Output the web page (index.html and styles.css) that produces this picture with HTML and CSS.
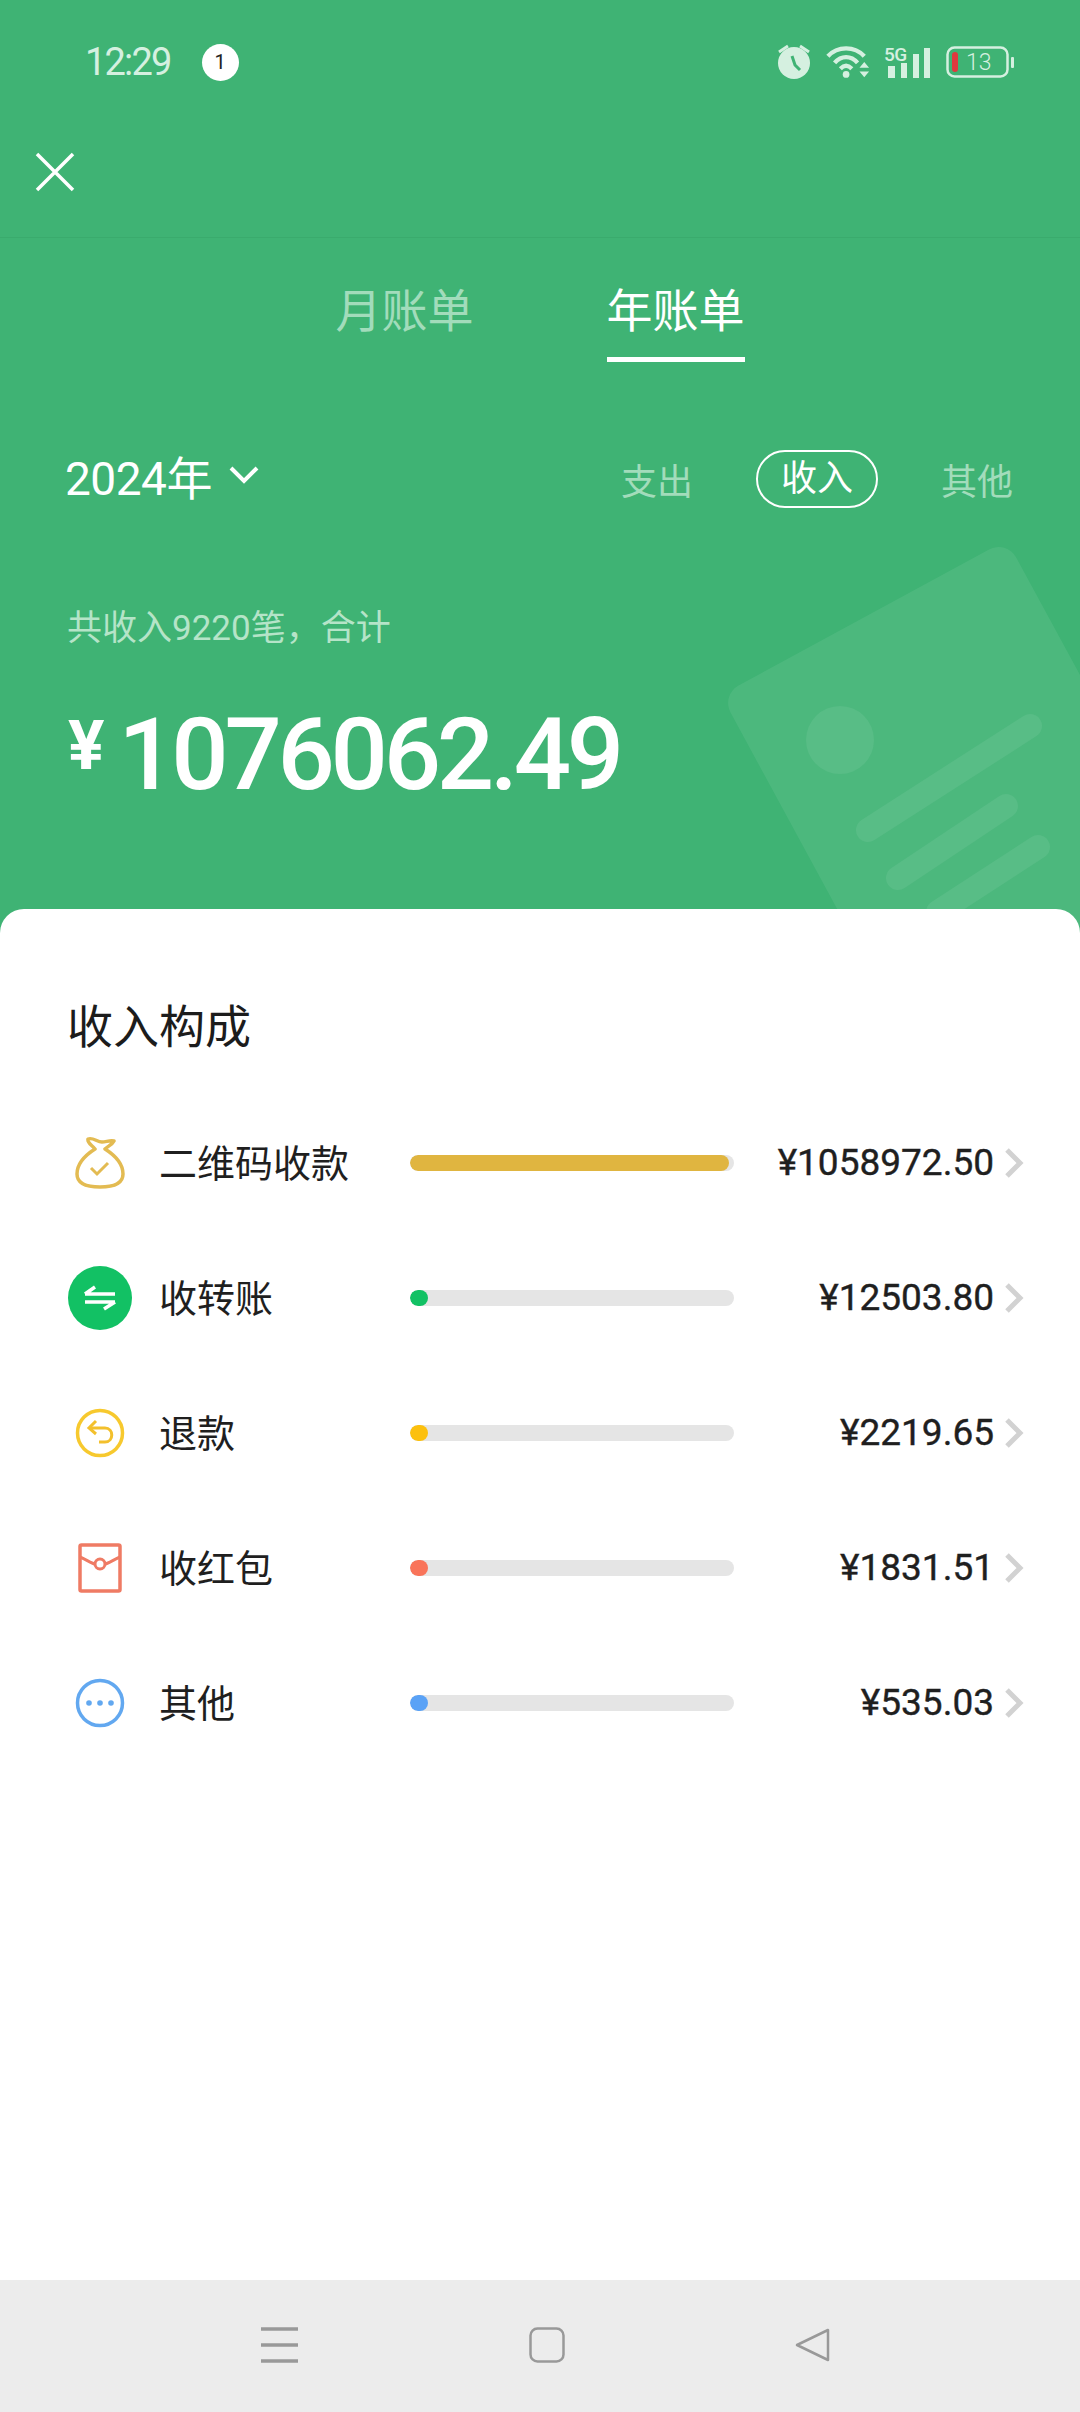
FILE: index.html
```html
<!doctype html>
<html lang="zh-CN">
    <head>
        <meta charset="UTF-8" />
        <meta name="viewport" content="width=device-width, initial-scale=1.0" />
        <title>年账单</title>
        <link rel="stylesheet" href="styles.css">
    </head>
    <body>
        <div class="page">
            <div class="header">
                <svg class="decor" width="380" height="400" viewBox="0 0 380 400">
                    <rect x="21" y="155" width="325" height="420" rx="20" transform="rotate(-28.5 21 155)" fill="#fff" fill-opacity="0.07"/>
                    <circle cx="140" cy="200" r="34" fill="#fff" fill-opacity="0.07"/>
                    <path d="M168 290 L330 186 M198 338 L306 266 M238 372 L338 307" stroke="#fff" stroke-opacity="0.07" stroke-width="24" stroke-linecap="round"/>
                </svg>
                <div class="status-bar">
                    <div class="status-left">
                        <span class="time">12:29</span>
                        <span class="badge">1</span>
                    </div>
                    <div class="status-icons">
                        <svg width="36" height="36" viewBox="0 0 36 36">
                            <circle cx="18" cy="19" r="16" fill="#d5f0e0"/>
                            <path d="M3 8 L12 2 M33 8 L24 2" stroke="#d5f0e0" stroke-width="3" fill="none"/>
                            <path d="M16 12 L19 21 L24 26" stroke="#3fb374" stroke-width="3" fill="none"/>
                        </svg>
                        <svg class="wifi" width="44" height="34" viewBox="0 0 46 34">
                            <path d="M2 11 C12 0 30 0 40 11 M9 18 C16 10 26 10 33 18 M15 24 C19 20 23 20 27 24" stroke="#d5f0e0" stroke-width="4.5" fill="none"/>
                            <circle cx="21" cy="30" r="3.5" fill="#d5f0e0"/>
                            <path d="M35 23 L45 23 L40 17 Z M35 27 L45 27 L40 33 Z" fill="#d5f0e0"/>
                        </svg>
                        <svg class="signal" width="48" height="36" viewBox="0 0 48 36">
                            <text x="0" y="17" class="signal-text">5G</text>
                            <rect x="4" y="22" width="7" height="12" fill="#d5f0e0"/>
                            <rect x="17" y="19" width="6" height="15" fill="#d5f0e0"/>
                            <rect x="29" y="10" width="6" height="24" fill="#d5f0e0"/>
                            <rect x="40" y="4" width="6" height="30" fill="#d5f0e0"/>
                        </svg>
                        <svg class="battery" width="68" height="34" viewBox="0 0 68 34">
                            <rect x="1.5" y="2.5" width="60" height="29" rx="7" fill="none" stroke="#d5f0e0" stroke-width="2.5"/>
                            <rect x="6" y="7" width="6" height="20" rx="3" fill="#e0393e"/>
                            <rect x="65" y="12" width="3" height="11" rx="1" fill="#d5f0e0"/>
                            <text x="20" y="25" class="battery-text">13</text>
                        </svg>
                    </div>
                </div>
                <div class="toolbar">
                    <svg width="40" height="40" viewBox="0 0 40 40">
                        <path d="M2 2 L38 38 M38 2 L2 38" stroke="#fff" stroke-width="3.5" fill="none"/>
                    </svg>
                </div>
                <div class="tabs">
                    <div class="tab">月账单</div>
                    <div class="tab tab-active">年账单</div>
                </div>
                <div class="filter-row">
                    <div class="year">
                        2024年
                        <svg width="30" height="20" viewBox="0 0 30 20">
                            <path d="M2 3 L15 16 L28 3" stroke="#fff" stroke-width="4" fill="none"/>
                        </svg>
                    </div>
                    <div class="filters">
                        <span class="filter">支出</span>
                        <span class="filter filter-active">收入</span>
                        <span class="filter">其他</span>
                    </div>
                </div>
                <div class="summary">共收入9220笔，合计</div>
                <div class="total"><span class="total-sign">¥</span>1076062.49</div>
            </div>

            <div class="sheet">
                <h2>收入构成</h2>

                <div class="row">
                    <div class="row-icon">
                        <svg width="50" height="54" viewBox="0 0 50 54">
                            <path d="M20 13 C17 9 12 7 13 3 C18 1 22 6 27 6 C31 6 35 4 39 5 C37 9 33 10 30 13 C41 20 48 29 48 38 C48 48 38 51 25 51 C12 51 2 48 2 38 C2 29 9 20 20 13 Z" fill="none" stroke="#e3bb52" stroke-width="3.5" stroke-linejoin="round"/>
                            <path d="M16 32 L22 38 L33 27" fill="none" stroke="#e3bb52" stroke-width="3"/>
                        </svg>
                    </div>
                    <div class="row-label">二维码收款</div>
                    <div class="track"><div class="fill fill-gold" style="width: 98.5%"></div></div>
                    <div class="row-amount">¥1058972.50</div>
                    <svg class="chevron" width="20" height="30" viewBox="0 0 20 30">
                        <path d="M3 2 L16 15 L3 28" stroke="#d2d2d2" stroke-width="5" fill="none"/>
                    </svg>
                </div>

                <div class="row">
                    <div class="row-icon">
                        <svg width="64" height="64" viewBox="0 0 64 64">
                            <circle cx="32" cy="32" r="32" fill="#12c164"/>
                            <path d="M17 28 L47 28 M17 28 L27 21 M17 36 L47 36 M47 36 L36 43" stroke="#fff" stroke-width="3.5" fill="none"/>
                        </svg>
                    </div>
                    <div class="row-label">收转账</div>
                    <div class="track"><div class="fill fill-green"></div></div>
                    <div class="row-amount">¥12503.80</div>
                    <svg class="chevron" width="20" height="30" viewBox="0 0 20 30">
                        <path d="M3 2 L16 15 L3 28" stroke="#d2d2d2" stroke-width="5" fill="none"/>
                    </svg>
                </div>

                <div class="row">
                    <div class="row-icon">
                        <svg width="50" height="50" viewBox="0 0 50 50">
                            <circle cx="25" cy="25" r="22.5" fill="none" stroke="#f7c92e" stroke-width="3.5"/>
                            <path d="M15 20 L30 20 C39 20 39 34 30 34 L24 34" fill="none" stroke="#f3c02c" stroke-width="3"/>
                            <path d="M21 13 L14 20 L21 26" fill="none" stroke="#f3c02c" stroke-width="3"/>
                        </svg>
                    </div>
                    <div class="row-label">退款</div>
                    <div class="track"><div class="fill fill-yellow"></div></div>
                    <div class="row-amount">¥2219.65</div>
                    <svg class="chevron" width="20" height="30" viewBox="0 0 20 30">
                        <path d="M3 2 L16 15 L3 28" stroke="#d2d2d2" stroke-width="5" fill="none"/>
                    </svg>
                </div>

                <div class="row">
                    <div class="row-icon">
                        <svg width="44" height="50" viewBox="0 0 44 50">
                            <rect x="2" y="2" width="40" height="46" rx="1.5" fill="none" stroke="#ef7b64" stroke-width="3.5"/>
                            <path d="M2 14 C9 17 13 20 17 21 M42 14 C35 17 31 20 27 21" fill="none" stroke="#ef7b64" stroke-width="3"/>
                            <circle cx="22" cy="21" r="5" fill="none" stroke="#ef7b64" stroke-width="3"/>
                        </svg>
                    </div>
                    <div class="row-label">收红包</div>
                    <div class="track"><div class="fill fill-red"></div></div>
                    <div class="row-amount">¥1831.51</div>
                    <svg class="chevron" width="20" height="30" viewBox="0 0 20 30">
                        <path d="M3 2 L16 15 L3 28" stroke="#d2d2d2" stroke-width="5" fill="none"/>
                    </svg>
                </div>

                <div class="row">
                    <div class="row-icon">
                        <svg width="50" height="50" viewBox="0 0 50 50">
                            <circle cx="25" cy="25" r="22.5" fill="none" stroke="#62a8f0" stroke-width="3.5"/>
                            <circle cx="14" cy="25" r="2.8" fill="#62a8f0"/>
                            <circle cx="25" cy="25" r="2.8" fill="#62a8f0"/>
                            <circle cx="36" cy="25" r="2.8" fill="#62a8f0"/>
                        </svg>
                    </div>
                    <div class="row-label">其他</div>
                    <div class="track"><div class="fill fill-blue"></div></div>
                    <div class="row-amount">¥535.03</div>
                    <svg class="chevron" width="20" height="30" viewBox="0 0 20 30">
                        <path d="M3 2 L16 15 L3 28" stroke="#d2d2d2" stroke-width="5" fill="none"/>
                    </svg>
                </div>
            </div>

            <div class="nav-bar">
                <svg width="38" height="36" viewBox="0 0 38 36">
                    <path d="M0 2 L37 2 M0 18 L37 18 M0 34 L37 34" stroke="#999" stroke-width="3.5" fill="none"/>
                </svg>
                <svg width="36" height="36" viewBox="0 0 36 36">
                    <rect x="1.5" y="1.5" width="33" height="33" rx="7" fill="none" stroke="#999" stroke-width="2.5"/>
                </svg>
                <svg width="36" height="36" viewBox="0 0 36 36">
                    <path d="M33 3 L33 33 L2 18 Z" fill="none" stroke="#999" stroke-width="2.5" stroke-linejoin="round"/>
                </svg>
            </div>
        </div>
    </body>
</html>
```

FILE: styles.css
```css
* {
    box-sizing: border-box;
}
body {
    margin: 0;
    padding: 0;
    font-family: Roboto, "Noto Sans CJK SC", sans-serif;
    background: #fff;
}
.page {
    width: 1080px;
    height: 2412px;
    display: flex;
    flex-direction: column;
    overflow: hidden;
}

/* green header, runs on under the rounded sheet */
.header {
    position: relative;
    height: 940px;
    background: #3fb374;
    color: #fff;
    overflow: hidden;
    flex-shrink: 0;
}
.decor {
    position: absolute;
    left: 700px;
    top: 540px;
}
.status-bar {
    height: 124px;
    padding: 0 66px 0 85px;
    display: flex;
    justify-content: space-between;
    align-items: center;
}
.status-left {
    display: flex;
    align-items: center;
    gap: 31px;
}
.time {
    font-size: 38px;
    font-weight: 400;
    letter-spacing: -1.8px;
    color: #d5f0e0;
}
.badge {
    width: 37px;
    height: 37px;
    border-radius: 50%;
    background: #fff;
    color: #222;
    font-size: 20px;
    display: flex;
    align-items: center;
    justify-content: center;
}
.status-icons {
    display: flex;
    align-items: center;
    gap: 14px;
}
.signal-text {
    font-family: Roboto, sans-serif;
    font-size: 19px;
    font-weight: 500;
    letter-spacing: -0.5px;
    fill: #d5f0e0;
}
.battery-text {
    font-family: Roboto, sans-serif;
    font-size: 23px;
    font-weight: 300;
    fill: #d5f0e0;
}
.toolbar {
    height: 114px;
    padding: 28px 0 0 35px;
    border-bottom: 1px solid #3aab6d;
}
.tabs {
    display: flex;
    justify-content: center;
    gap: 133px;
    padding-top: 43px;
}
.tab {
    font-size: 46px;
    line-height: 60px;
    height: 81px;
    color: #a2dcbb;
}
.tab-active {
    color: #fff;
    border-bottom: 5px solid #fff;
}
.filter-row {
    display: flex;
    justify-content: space-between;
    align-items: center;
    height: 62px;
    margin-top: 86px;
    padding: 0 67px 0 65px;
}
.year {
    display: flex;
    align-items: center;
    gap: 17px;
    padding-bottom: 8px;
    font-size: 46px;
    letter-spacing: -0.5px;
}
.filters {
    display: flex;
    align-items: center;
    gap: 63px;
}
.filter {
    font-size: 36px;
    color: #a2dcbb;
}
.filter-active {
    color: #fff;
    padding: 0 23px;
    height: 58px;
    line-height: 54px;
    border: 2px solid #fff;
    border-radius: 29px;
}
.summary {
    margin-top: 97px;
    padding-left: 67px;
    font-size: 35px;
    line-height: 44px;
    color: #b5e4c8;
}
.total {
    display: flex;
    align-items: baseline;
    margin-top: 44px;
    padding-left: 68px;
    font-size: 101px;
    line-height: 120px;
    font-weight: 500;
    letter-spacing: -4.3px;
}
.total-sign {
    font-size: 68px;
    font-weight: 700;
    margin-right: 18px;
    position: relative;
    top: -20px;
}

/* white sheet */
.sheet {
    flex: 1;
    background: #fff;
    margin-top: -31px;
    padding: 0 56px 0 68px;
    border-radius: 24px 24px 0 0;
    position: relative;
}
.sheet h2 {
    margin: 0 0 38px -1px;
    padding-top: 88px;
    font-size: 46px;
    line-height: 60px;
    font-weight: 400;
    color: #1c1c1c;
}
.row {
    display: flex;
    align-items: center;
    height: 135px;
}
.row-icon {
    width: 64px;
    display: flex;
    justify-content: center;
    margin-right: 27px;
}
.row-label {
    width: 251px;
    padding-bottom: 4px;
    font-size: 38px;
    color: #1f1f1f;
}
.track {
    width: 324px;
    height: 16px;
    border-radius: 8px;
    background: #e5e5e5;
    overflow: hidden;
}
.fill {
    height: 16px;
    width: 18px;
    border-radius: 8px;
}
.fill-gold {
    background: #e0b540;
}
.fill-green {
    background: #12c164;
}
.fill-yellow {
    background: #fcc00e;
}
.fill-red {
    background: #f9745a;
}
.fill-blue {
    background: #5aa2f6;
}
.row-amount {
    flex: 1;
    text-align: right;
    font-size: 37px;
    font-weight: 400;
    -webkit-text-stroke: 0.4px #1f1f1f;
    color: #1f1f1f;
}
.chevron {
    margin-left: 10px;
    flex-shrink: 0;
}

/* android nav */
.nav-bar {
    height: 132px;
    flex-shrink: 0;
    background: #ececec;
    display: flex;
    justify-content: center;
    align-items: flex-start;
    gap: 230px;
    padding: 47px 0 0 12px;
}
```
